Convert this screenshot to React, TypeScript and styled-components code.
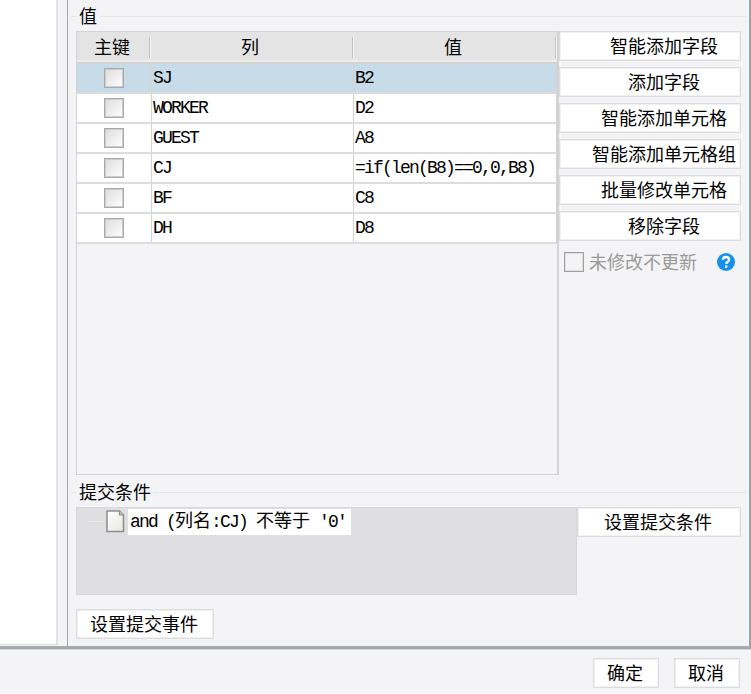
import React from 'react';
import styled, { createGlobalStyle } from 'styled-components';

const GlobalStyle = createGlobalStyle`
  * { box-sizing: border-box; }
  body {
    margin: 0;
    background: #f4f4f6;
    color: #000;
    font-family: "Noto Sans CJK SC", sans-serif;
    font-size: 18px;
    line-height: 18px;
    overflow: hidden;
  }
`;

const Dialog = styled.div`
  width: 751px;
  height: 694px;
  display: flex;
  flex-direction: column;
  background: #f4f4f6;
  border-bottom: 1px solid #fafafa;
  white-space: nowrap;
`;

const Body = styled.div`
  height: 646px;
  display: flex;
`;

const Sidebar = styled.div`
  width: 58px;
  height: 645px;
  background: #fff;
  border-right: 2px solid #e3e3e5;
  border-bottom: 1px solid #dcdcde;
`;

const Panel = styled.div`
  width: 684px;
  margin-left: 9px;
  border-left: 1px solid #a4a4a4;
  border-right: 2px solid #9ba1a4;
  padding-left: 3px;
`;

const Divider = styled.div`
  height: 4px;
  flex: none;
  background: #9aa6b9;
  border-top: 2px solid #aaa9a4;
  border-bottom: 1px solid #d3d6dc;
`;

const Legend = styled.div<{ $top: number }>`
  display: flex;
  align-items: center;
  height: 18px;
  margin-top: ${p => p.$top}px;
  gap: 3px;
  &::before, &::after {
    content: "";
    height: 1px;
    background: #e5e5e7;
    margin-top: 3px;
  }
  &::before { width: 5px; }
  &::after { flex: 1; margin-right: 3px; }
`;

const Section = styled.div<{ $top: number }>`
  display: flex;
  align-items: flex-start;
  margin: ${p => p.$top}px 0 0 5px;
`;

const TableBox = styled.div`
  width: 483px;
  height: 444px;
  border: 1px solid #d3d3d4;
  border-right-width: 2px;
`;

const TableHead = styled.div`
  display: grid;
  grid-template-columns: 73px 203px 1fr;
  height: 32px;
  padding: 5px 1px 5px 0;
  background: #e4e4e4;
  border-bottom: 2px solid #d3d3d3;
  box-shadow: inset 0 -2px #eee;
`;

const HeadCell = styled.div`
  display: flex;
  justify-content: center;
  align-items: center;
  padding: 0 2px 3px 0;
  border-right: 1px solid #c3c0b5;
  box-shadow: 1px 0 #f6f6f6;
`;

const Row = styled.div<{ $selected?: boolean }>`
  display: grid;
  grid-template-columns: 75px 202px 1fr;
  height: 30px;
  background: ${p => (p.$selected ? '#c8dbe8' : '#fff')};
  border-bottom: 2px solid #dcdcdc;
`;

const Cell = styled.div`
  display: flex;
  align-items: center;
  padding: 0 0 1px 1px;
  border-right: 1px solid #d2d2d2;
  &:first-child { justify-content: center; padding: 0 1px 0 0; }
`;

const Mono = styled.span`
  font-family: "Liberation Mono", "Noto Sans CJK SC", monospace;
  font-size: 18px;
  letter-spacing: -1.8px;
  white-space: pre;
`;

const Checkbox = styled.span<{ $disabled?: boolean }>`
  width: 20px;
  height: 20px;
  flex: none;
  border: ${p => (p.$disabled ? '1px solid #a0a09e' : '1px solid #a9a9a9')};
  background: ${p => (p.$disabled ? '#f4f4f6' : 'linear-gradient(135deg, #dcdcdc, #fff)')};
  box-shadow: inset 0 0 0 1px ${p => (p.$disabled ? '#dededd' : '#cdcdcd')};
`;

const ButtonColumn = styled.div`
  width: 182px;
  display: flex;
  flex-direction: column;
  gap: 6px;
`;

const Button = styled.button<{ $width: number; $shift?: number }>`
  width: ${p => p.$width}px;
  height: 30px;
  padding: 0 ${p => (p.$shift ? 0 : 2)}px 3px ${p => p.$shift || 0}px;
  flex: none;
  display: flex;
  align-items: center;
  justify-content: center;
  background: #fff;
  border: 1px solid #dcdcde;
  box-shadow: inset 0 0 0 1px #f1f1f2;
  color: #000;
  font: inherit;
`;

const Option = styled.div`
  display: flex;
  align-items: center;
  gap: 5px;
  height: 30px;
  padding-left: 5px;
  color: #9a9a98;
`;

const OptionLabel = styled.span`
  padding-bottom: 2px;
`;

const HelpIcon = styled.svg`
  margin-left: 14px;
`;

const Tree = styled.div`
  width: 501px;
  height: 88px;
  background: #dfdfe1;
  border: 1px solid #d8d8da;
`;

const TreeNode = styled.div`
  display: flex;
  align-items: center;
  height: 27px;
  padding-left: 10px;
`;

const Branch = styled.span`
  width: 16px;
  height: 1px;
  margin-right: 3px;
  background: #eaeaec;
`;

const NodeLabel = styled.span`
  display: flex;
  align-items: center;
  width: 223px;
  height: 26px;
  margin-left: 3px;
  padding: 0 0 2px 2px;
  background: #fff;
`;

const Cjk = styled.span`
  font-family: "Noto Sans CJK SC", sans-serif;
  letter-spacing: 0;
`;

const EventBar = styled.div`
  margin: 14px 0 0 5px;
`;

const Footer = styled.div`
  display: flex;
  justify-content: flex-end;
  gap: 15px;
  padding: 8px 11px 0 0;
`;

const fields = [
  ['SJ', 'B2'],
  ['WORKER', 'D2'],
  ['GUEST', 'A8'],
  ['CJ', '=if(len(B8)==0,0,B8)'],
  ['BF', 'C8'],
  ['DH', 'D8'],
];

const actions = ['智能添加字段', '添加字段', '智能添加单元格', '智能添加单元格组', '批量修改单元格', '移除字段'];

const DocIcon = () => (
  <svg width="19" height="23" viewBox="0 0 19 23">
    <defs>
      <linearGradient id="paper" x1="0" y1="0" x2="1" y2="1">
        <stop offset="0" stopColor="#fff" />
        <stop offset="1" stopColor="#e9e9dc" />
      </linearGradient>
    </defs>
    <path d="M1 1H13.5L17.5 5V21.5H1Z" fill="url(#paper)" stroke="#8d8d89" strokeWidth="1.5" />
    <path d="M13.5 1V5H17.5" fill="#c9c9c4" stroke="#8d8d89" strokeWidth="1.2" />
  </svg>
);

export default function App() {
  return (
    <>
      <GlobalStyle />
      <Dialog>
        <Body>
          <Sidebar />
          <Panel>
            <Legend $top={6}>值</Legend>
            <Section $top={7}>
              <TableBox>
                <TableHead>
                  <HeadCell>主键</HeadCell>
                  <HeadCell>列</HeadCell>
                  <HeadCell>值</HeadCell>
                </TableHead>
                {fields.map(([name, value], i) => (
                  <Row key={name} $selected={i === 0}>
                    <Cell><Checkbox /></Cell>
                    <Cell><Mono>{name}</Mono></Cell>
                    <Cell><Mono>{value}</Mono></Cell>
                  </Row>
                ))}
              </TableBox>
              <ButtonColumn>
                {actions.map(label => (
                  <Button key={label} $width={182} $shift={28}>{label}</Button>
                ))}
                <Option>
                  <Checkbox $disabled />
                  <OptionLabel>未修改不更新</OptionLabel>
                  <HelpIcon width="20" height="20" viewBox="0 0 20 20">
                    <circle cx="10" cy="10" r="9" fill="#1390f0" />
                    <path d="M6.9 7.8C6.9 4 13.1 4.1 13.1 7.7C13.1 9.8 10.2 9.8 10.2 12.1" fill="none" stroke="#fff" strokeWidth="2.3" />
                    <rect x="9" y="13.4" width="2.4" height="2.3" fill="#fff" />
                  </HelpIcon>
                </Option>
              </ButtonColumn>
            </Section>
            <Legend $top={7}>提交条件</Legend>
            <Section $top={7}>
              <Tree>
                <TreeNode>
                  <Branch />
                  <DocIcon />
                  <NodeLabel>
                    <Mono>and (<Cjk>列名</Cjk>:CJ) <Cjk>不等于</Cjk> '0'</Mono>
                  </NodeLabel>
                </TreeNode>
              </Tree>
              <Button $width={164}>设置提交条件</Button>
            </Section>
            <EventBar>
              <Button $width={138}>设置提交事件</Button>
            </EventBar>
          </Panel>
        </Body>
        <Divider />
        <Footer>
          <Button $width={66}>确定</Button>
          <Button $width={66}>取消</Button>
        </Footer>
      </Dialog>
    </>
  );
}
